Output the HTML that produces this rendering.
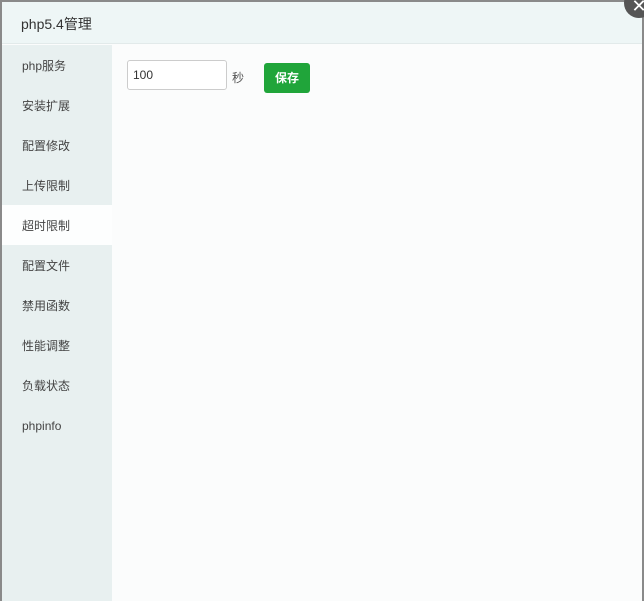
<!DOCTYPE html>
<html><head><meta charset="utf-8"><style>
*{margin:0;padding:0;box-sizing:border-box}
body{width:644px;height:601px;background:#8a8a8a;position:relative;overflow:hidden;font-family:"Liberation Sans","Noto Sans CJK SC",sans-serif}
.win{position:absolute;left:2px;top:2px;width:640px;height:599px;background:#fbfcfc}
.hd{height:42px;background:#eef6f6;border-bottom:1px solid #e2eaea;font-size:14px;color:#333;padding-left:19px;line-height:45px}
.sb{position:absolute;left:0;top:43px;width:110px;bottom:0;background:#e8f0f0}
.sb div{height:40px;line-height:42px;font-size:12px;color:#444;padding-left:20px}
.sb .on{background:#fdfefe}
input{position:absolute;left:125px;top:58px;width:100px;height:30px;border:1px solid #ccc;border-radius:3px;font-size:12px;padding-left:5px;font-family:inherit;color:#333;background:#fff}
.s{position:absolute;left:230px;top:67px;font-size:12px;color:#555}
.btn{position:absolute;left:262px;top:61px;width:46px;height:30px;background:#20a53a;border-radius:3px;color:#fff;font-size:12px;font-weight:bold;text-align:center;line-height:31px}
.x{position:absolute;left:624px;top:-12px;width:30px;height:30px;border-radius:50%;background:#555;color:#fff;font-size:18px;text-align:center;line-height:36px}
</style></head><body>
<div class="win">
<div class="hd">php5.4管理</div>
<div class="sb">
<div>php服务</div><div>安装扩展</div><div>配置修改</div><div>上传限制</div><div class="on">超时限制</div><div>配置文件</div><div>禁用函数</div><div>性能调整</div><div>负载状态</div><div>phpinfo</div>
</div>
<input value="100"><span class="s">秒</span><div class="btn">保存</div>
</div>
<div class="x">✕</div>
</body></html>
